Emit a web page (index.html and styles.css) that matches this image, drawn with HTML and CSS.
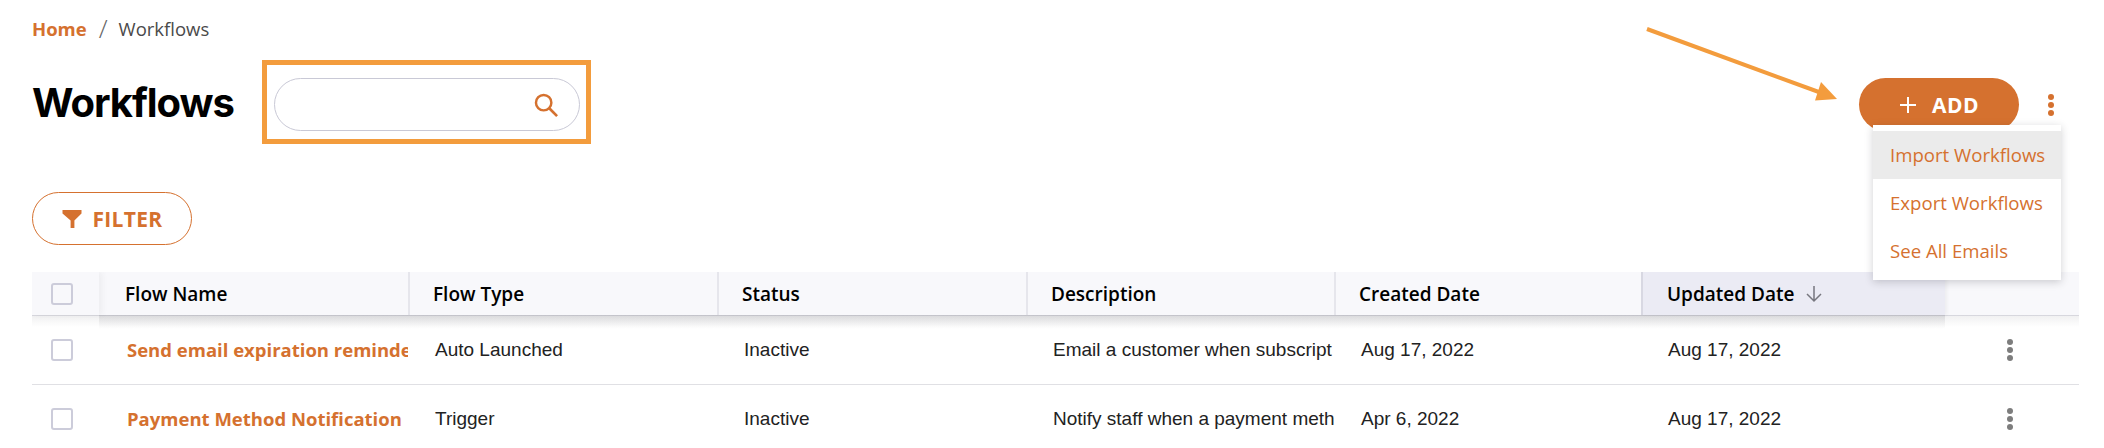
FILE: index.html
```html
<!DOCTYPE html>
<html lang="en">
<head>
<meta charset="utf-8">
<title>Workflows</title>
<link rel="stylesheet" href="styles.css">
</head>
<body>
<div class="page">
  <nav class="crumbs"><a class="crumb-home">Home</a><span class="crumb-sep">/</span><span class="crumb-cur">Workflows</span></nav>
  <header class="title-row">
    <h1 class="title">Workflows</h1>
    <div class="callout">
      <div class="search">
        <svg class="search-icon" viewBox="0 0 24 24" width="28" height="28"><circle cx="10" cy="10" r="6.6" fill="none" stroke="currentColor" stroke-width="2.100"/><path d="M15 15l6.500 6.500" stroke="currentColor" stroke-width="2.300" fill="none"/></svg>
      </div>
    </div>
    <div class="actions">
      <button class="add"><svg viewBox="0 0 18 18" width="18" height="18"><path d="M9 1v16M1 9h16" stroke="#fff" stroke-width="2" fill="none"/></svg><span>ADD</span></button>
      <span class="dots dots-orange"><i></i><i></i><i></i></span>
    </div>
  </header>
  <button class="filter"><svg viewBox="0 0 20 20" width="20" height="20"><path d="M0.5 1h19v3.400L12.400 11.600V19H8.600V11.600L0.500 4.400z" fill="currentColor"/></svg><span>FILTER</span></button>
  <section class="table">
    <div class="row head">
      <div class="cell check-cell"><span class="box"></span></div>
      <div class="cell first-head">Flow Name</div>
      <div class="cell sep">Flow Type</div>
      <div class="cell sep">Status</div>
      <div class="cell sep">Description</div>
      <div class="cell sep">Created Date</div>
      <div class="cell sep sorted">Updated Date<svg class="sort" viewBox="0 0 18 18" width="18" height="18"><path d="M9 1v15M2 9l7 7 7-7" stroke="#77777f" stroke-width="1.500" fill="none"/></svg></div>
      <div class="cell tail"></div>
    </div>
    <div class="row body">
      <div class="cell check-cell"><span class="box"></span></div>
      <div class="cell name">Send email expiration reminde</div>
      <div class="cell">Auto Launched</div>
      <div class="cell">Inactive</div>
      <div class="cell">Email a customer when subscript</div>
      <div class="cell">Aug 17, 2022</div>
      <div class="cell">Aug 17, 2022</div>
      <div class="cell tail"><span class="dots"><i></i><i></i><i></i></span></div>
    </div>
    <div class="row body">
      <div class="cell check-cell"><span class="box"></span></div>
      <div class="cell name">Payment Method Notification</div>
      <div class="cell">Trigger</div>
      <div class="cell">Inactive</div>
      <div class="cell">Notify staff when a payment meth</div>
      <div class="cell">Apr 6, 2022</div>
      <div class="cell">Aug 17, 2022</div>
      <div class="cell tail"><span class="dots"><i></i><i></i><i></i></span></div>
    </div>
  </section>
  <ul class="menu">
    <li class="active">Import Workflows</li>
    <li>Export Workflows</li>
    <li>See All Emails</li>
  </ul>
  <svg class="arrow" viewBox="0 0 200 80" width="200" height="80"><path d="M2 2L182 68" stroke="#f39c3d" stroke-width="4" fill="none"/><path d="M192 72L170 73.500L176 55z" fill="#f39c3d"/></svg>
</div>
</body>
</html>
```

FILE: styles.css
```css
* { box-sizing: border-box; }
html, body { margin: 0; height: 100%; background: #fff; overflow: hidden; }
.page {
  position: relative;
  width: 2104px;
  height: 448px;
  padding: 15px 25px 0 32px;
  font-family: "Open Sans", sans-serif;
  font-size: 18px;
  color: #111;
}
.crumbs { display: flex; align-items: center; height: 26px; font-size: 18.5px; }
.crumb-home { color: #d5712f; font-weight: 700; }
.crumb-sep { margin: 0 11px 0 12px; color: #666; font-size: 26px; font-weight: 300; line-height: 26px; }
.crumb-cur { color: #4a4a4a; }

.title-row { display: flex; align-items: center; height: 84px; margin-top: 19px; }
.title { margin: 0; width: 230px; font-family: Inter, sans-serif; font-size: 40px; font-weight: 700; color: #000; letter-spacing: -1.05px; }
.callout { width: 329px; height: 84px; border: 5px solid #f39c3d; padding: 13px 6px 8px 7px; }
.search {
  display: flex; align-items: center; justify-content: flex-end;
  height: 53px; border: 1px solid #c9c9d6; border-radius: 27px; padding-right: 19px;
  color: #d5712f;
}
.actions { display: flex; align-items: center; margin-left: auto; height: 53px; margin-top: 5px; padding-right: 25px; }
.add {
  display: flex; align-items: center; justify-content: center; gap: 15px;
  width: 160px; height: 53px; border: 0; border-radius: 27px;
  background: #d5712f; color: #fff;
  font-family: "Open Sans", sans-serif; font-size: 21px; font-weight: 700; letter-spacing: 0.4px;
}
.dots { display: inline-flex; flex-direction: column; gap: 2px; }
.dots i { display: block; width: 6px; height: 6px; border-radius: 50%; background: #7d7d7d; }
.dots-orange { margin-left: 29px; }
.dots-orange i { background: #d5712f; }

.filter {
  display: flex; align-items: center; justify-content: center; gap: 11px;
  width: 160px; height: 53px; margin-top: 48px;
  background: #fff; border: 1px solid #d5712f; border-radius: 27px; color: #d5712f;
  font-family: "Open Sans", sans-serif; font-size: 21px; font-weight: 700; letter-spacing: 0.3px;
}

.table { margin-top: 27px; width: 2047px; overflow: hidden; }
.row { display: grid; grid-template-columns: 67px 309px 309px 309px 308px 307px 304px 134px; align-items: stretch; }
.cell { display: flex; align-items: center; padding-left: 27px; white-space: nowrap; overflow: hidden; min-width: 0; }
.check-cell { padding-left: 19px; }
.box { display: block; width: 22px; height: 22px; border: 2px solid #ccccda; border-radius: 3px; background: #fff; }
.head { position: relative; height: 44px; background: #f8f8fb; font-size: 19px; font-weight: 600; color: #000; border-bottom: 1px solid #e4e4ea; }
.head::after {
  content: "";
  position: absolute;
  left: 0;
  right: 0;
  top: 100%;
  height: 14px;
  background:
    linear-gradient(rgba(60, 60, 70, 0.13), rgba(60, 60, 70, 0)) 67px 0 / 1846px 100% no-repeat,
    linear-gradient(rgba(60, 60, 70, 0.08), rgba(60, 60, 70, 0)) 0 0 / 100% 12px no-repeat;
}
.head .check-cell { box-shadow: 3px 0 6px rgba(60, 60, 70, 0.06); }
.head .box { background: #f8f8fb; }
.first-head { padding-left: 26px; }
.sep { border-left: 2px solid #e6e6ec; padding-left: 23px; }
.sorted { background: #ebebf4; gap: 11px; padding-left: 24px; border-left-color: #d8d8e2; box-shadow: 2px 0 3px rgba(60, 60, 70, 0.06); }
.body { height: 69px; border-bottom: 1px solid #e0e0e4; font-family: "Liberation Sans", Arial, sans-serif; font-size: 19px; color: #222; }
.body .check-cell { padding-left: 19px; }
.body .tail { padding-left: 62px; }
.name { font-family: "Open Sans", sans-serif; font-size: 18.5px; font-weight: 700; color: #d5712f; padding-left: 28px; padding-bottom: 2px; }

.menu {
  position: absolute; left: 1873px; top: 125px; width: 188px; height: 155px;
  margin: 0; padding: 6px 0; list-style: none; background: #fff;
  box-shadow: 0 2px 8px rgba(40, 40, 50, 0.22);
  color: #d5712f; font-size: 18.6px;
}
.menu li { height: 48px; line-height: 48px; padding-left: 17px; }
.menu .active { background: #ebebeb; }
.arrow { position: absolute; left: 1645px; top: 27px; }
```
